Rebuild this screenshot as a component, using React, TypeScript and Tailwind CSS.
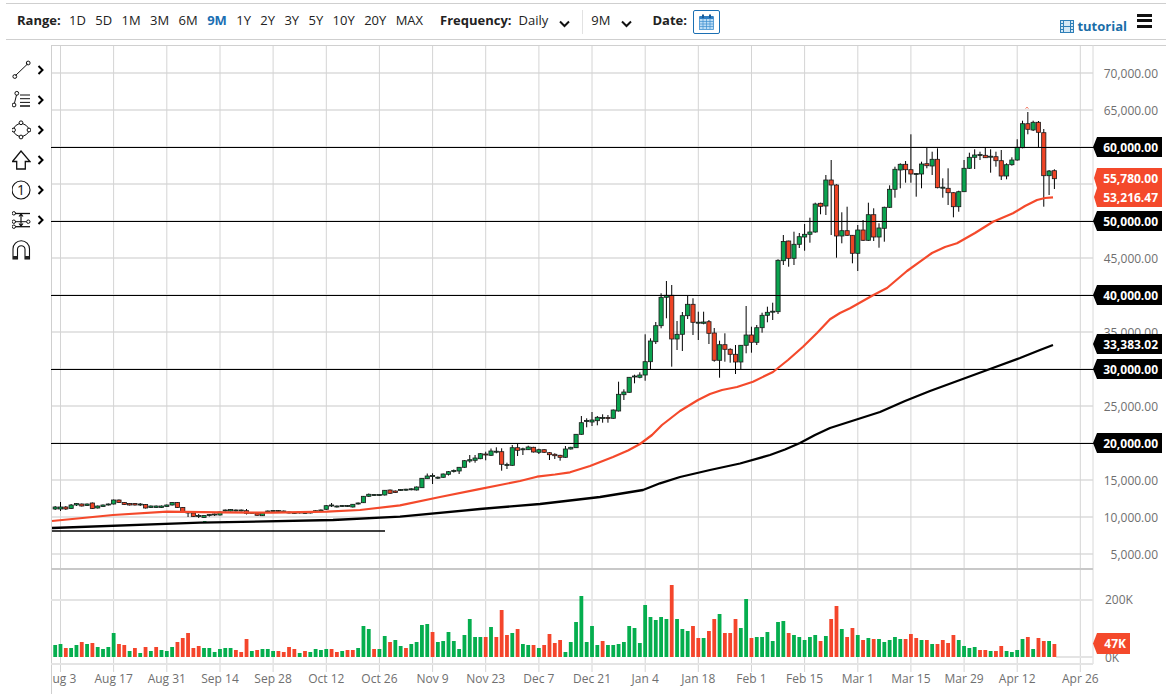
const ranges = ["1D", "5D", "1M", "3M", "6M", "9M", "1Y", "2Y", "3Y", "5Y", "10Y", "20Y", "MAX"];

// y of each candle in page pixels: [bodyTop, bodyBottom, high, low, up]
type Candle = [number, number, number, number, number];
const candles: Candle[] = [
  [507, 509, 506, 510, 1], [507, 509, 502, 511, 1], [507, 509, 506, 510, 0], [505, 508.5, 504, 509, 1], [503.5, 505, 503, 506, 1],
  [504, 506, 503.5, 506.5, 0], [504, 505.5, 503.5, 506, 1], [503, 508.5, 502.5, 509, 0], [506, 508, 505.5, 508.5, 1], [505, 506.5, 504.5, 507, 1],
  [504, 505, 503.5, 505.5, 1], [500, 504, 499.5, 504.5, 1], [500, 502.5, 499.5, 503, 0], [502.5, 504.5, 502, 505, 0], [503.5, 505, 503, 505.5, 0],
  [503.5, 505, 503, 505.5, 0], [504, 505, 503, 506, 1], [504.5, 508, 504, 508.5, 0], [506, 507.5, 505.5, 508, 1], [506, 507.5, 505.5, 508, 1],
  [506, 507.5, 505.5, 508, 1], [505, 506.5, 504.5, 507, 1], [502.5, 505, 502, 505.5, 1], [502.5, 507.5, 502, 508, 0], [507.5, 512, 507, 512.5, 0],
  [512, 513, 511.5, 517, 1], [513, 516.5, 512.5, 517, 0], [515.5, 516.5, 514, 518, 1], [515.5, 517.5, 515, 518, 1], [514.5, 515.5, 514, 516.5, 1],
  [514, 515, 513.5, 516, 1], [512, 515, 511.5, 515.5, 1], [510, 511, 509.5, 511.5, 1], [509.5, 511, 509, 511.5, 1], [510, 511, 509.5, 511.5, 1],
  [510, 511, 509.5, 511.5, 1], [510.7, 513.3, 509, 514.5, 0], [512.5, 513.5, 512, 514, 1], [513.3, 515.3, 513, 515.8, 0], [513, 515.7, 512.5, 516, 1],
  [511, 512, 510.5, 512.5, 1], [510.5, 511.5, 510, 512, 1], [510.5, 511.5, 510, 512, 1], [511, 512, 510.5, 512.5, 1], [512, 513, 511.5, 513.5, 1],
  [512.5, 513.5, 512, 514, 1], [512, 513, 511.5, 513.5, 1], [512.5, 513.5, 512, 514, 1], [512, 513, 511.5, 513.5, 1], [510.7, 511.7, 510, 512.5, 1],
  [510, 511, 509.5, 511.5, 1], [505.7, 509.3, 505, 510, 1], [505, 506, 503, 507, 1], [506, 507, 505.5, 507.5, 1], [505.5, 506.5, 505, 507, 1],
  [505.5, 506.5, 505, 507, 1], [504.3, 507, 504, 507.5, 1], [503, 504, 502.5, 504.5, 1], [496.3, 502.7, 496, 503, 1], [494.3, 496.3, 493.5, 497, 1],
  [494.5, 495.5, 494, 496, 1], [494.5, 495.5, 494, 496, 1], [490.3, 495, 490, 495.5, 1], [490, 493.3, 489.5, 494, 0], [491, 492.5, 490.5, 493, 0],
  [489.5, 490.5, 489, 491, 1], [489.2, 490.2, 488.8, 490.8, 1], [488.8, 489.8, 488.3, 490.3, 1], [487, 490, 486.5, 490.5, 1], [478.3, 487.7, 478, 488, 1],
  [476, 478.7, 473.5, 479, 1], [475.5, 476.5, 473.3, 484, 1], [477.2, 478.2, 476.5, 479, 1], [474, 477.3, 473.5, 477.8, 1], [471.7, 474.3, 471, 475.5, 1],
  [470.5, 471.5, 469.5, 472.5, 1], [467.3, 471, 467, 474, 1], [460.7, 467.3, 460.2, 467.8, 1], [459.7, 461, 455, 462.7, 1], [458, 460.3, 455, 462.7, 1],
  [453.7, 458.7, 453, 459.2, 1], [454, 455, 451.7, 460.3, 0], [451, 455.3, 448.5, 456, 1], [451.2, 452.2, 447.3, 453.3, 1], [451.7, 464.3, 448.3, 470.7, 0],
  [464.5, 465.5, 462.7, 469, 1], [447.7, 465.3, 445, 465.8, 1], [447.7, 450.3, 444, 456, 0], [448.8, 449.8, 447.7, 455, 1], [447, 449.7, 445.7, 450, 1],
  [447.3, 452, 446.8, 452.5, 0], [449.7, 452.3, 448.7, 454, 1], [449.7, 452.3, 449.2, 453, 0], [452.7, 454.7, 452, 460, 0], [454.3, 455.7, 453.3, 459, 0],
  [455.3, 457.3, 454.8, 460.7, 0], [449, 457.3, 446, 457.8, 1], [447.3, 449, 446.8, 449.5, 1], [434.3, 447.7, 434, 448, 1], [422.7, 434.3, 416, 434.8, 1],
  [420.5, 421.5, 418.3, 427.3, 1], [420, 422, 412, 426, 1], [417.3, 420.7, 416, 425.3, 1], [417.5, 418.5, 414.3, 422.7, 1], [417.5, 418.5, 415, 422.7, 0],
  [410, 418.3, 409.5, 418.8, 1], [394.3, 411, 381.7, 411.5, 1], [392, 394.7, 389.3, 400, 1], [377.3, 392.3, 377, 392.8, 1], [376, 377, 374.7, 383.3, 1],
  [375, 377.3, 372.3, 378.3, 1], [361.7, 375, 334.3, 380.7, 1], [341, 361.7, 338.3, 369, 1], [325.7, 341.7, 322, 344, 1], [297.3, 325.7, 293.3, 328.3, 1],
  [295.3, 297.3, 281, 318.3, 1], [295.3, 339, 285, 366.7, 0], [334.3, 339, 321, 350, 1], [315.7, 334.3, 312, 351, 1], [304.3, 315.7, 295, 319, 1],
  [304.3, 322.3, 298.3, 335, 0], [322.2, 323.2, 311.7, 340, 1], [322, 323.3, 311.7, 324.3, 1], [321.7, 333.3, 320, 344, 0], [333, 360.3, 328, 361.7, 0],
  [344.7, 360.3, 340.7, 377.7, 1], [344.7, 349.3, 333.3, 361.7, 0], [349.3, 354.3, 348.3, 362.7, 0], [354.3, 362, 345, 374, 0], [345.3, 362, 345, 369, 1],
  [335, 345.3, 306, 353.3, 1], [335, 342.3, 326.7, 352.7, 0], [327.7, 342.3, 325, 345, 1], [315.3, 327.7, 312.7, 332.7, 1], [312.3, 315.3, 306.7, 322.3, 1],
  [311.2, 312.2, 302.7, 320, 1], [260.3, 311.7, 259.3, 314, 1], [241.5, 260.7, 235, 265, 1], [241, 258.3, 240.7, 266.7, 0], [244.3, 258.3, 231.7, 265, 1],
  [236.7, 244.3, 233, 248, 1], [234.3, 237, 224, 250.7, 1], [232, 234.3, 217.7, 242.7, 1], [204, 232, 202.7, 232.7, 1], [203.3, 206.3, 202.7, 214.3, 0],
  [180, 206, 175, 215, 1], [180, 185, 160, 235, 0], [185, 236, 184.3, 257.7, 0], [230.7, 236, 212.3, 243.3, 1], [230.7, 235.3, 206.7, 236, 0],
  [235.3, 253.3, 235, 263.3, 0], [230, 253.3, 225, 271, 1], [230, 240.3, 220, 241, 0], [214.7, 240.3, 202.7, 241, 1], [214.7, 237, 208.3, 241, 0],
  [228, 237, 223.3, 247.7, 1], [207.3, 228.3, 206.7, 241.7, 1], [189.3, 207.3, 185.3, 208, 1], [169.3, 189.3, 166.7, 197.7, 1], [164.3, 170, 163.3, 188.3, 1],
  [164.3, 169.7, 161, 182.7, 0], [169.7, 174, 134.3, 182.7, 0], [173.5, 174.5, 173, 196.7, 1], [164, 174, 161.7, 188.3, 1], [163.7, 165.7, 147.7, 168.3, 0],
  [159.3, 166, 151.7, 175, 1], [159.3, 187.7, 148.3, 188.3, 0], [187.2, 188.2, 178.3, 197.7, 1], [188.3, 192.7, 168.3, 205, 0], [192.7, 206.7, 192.3, 217.3, 0],
  [191.7, 206.7, 190.7, 211.7, 1], [168.3, 191.7, 160, 192, 1], [157.3, 168.3, 152.7, 169, 1], [155, 157.3, 149.3, 169, 1], [154.5, 155.5, 151.7, 160, 1],
  [155.3, 157.7, 147.7, 157.7, 0], [156.2, 157.2, 149.3, 172.7, 1], [156.7, 160.7, 151.7, 166.7, 0], [160.7, 176, 150, 180, 0], [164.7, 176, 163.3, 179.3, 1],
  [160, 164.7, 157.3, 165.7, 1], [147.3, 160, 139.3, 160.7, 1], [123.7, 147.7, 120.7, 148.3, 1], [123.7, 129.3, 112, 134.3, 0], [122.3, 130, 120.7, 131, 1],
  [122.3, 132.3, 121, 147.3, 0], [132.7, 175.7, 129, 206.7, 0], [171, 175.7, 170, 195, 1], [170.7, 178.7, 169.3, 189, 0],
];

// height in px, negative = red
const volume = [
  12, 13, -9, 9, 12, -15, 13, -14, 10, 8, 10, 24, -13, -12, 6, -9, 4, -10, 6, -10, 7, 6, 10, -15, -19, -24, -9, -11, 9, 9, 5, 8, 9, 9, -7, -5, -18, 6, -7, 8,
  8, 6, -6, -5, -10, -8, 4, -6, 5, 8, 7, 8, -8, -5, 6, -7, -7, 9, 31, 28, -8, 8, 21, -15, 17,
  11, -9, 13, 15, 32, 33, -25, 15, 16, 25, 16, 8, 22, 38, 20, 20, -20, 30, -20, -47, -22, 24, -28, 13, 12, -12, 9, -12, -23, -14,
  -17, 5, 15, 35, 61, 15, 31, 12, -16, 12, 12, 13, 15, 31, 29, 14, 52, 40, 37, 40, 38, -72, 38, 28, 26, -31, -19, 19, -26, -38,
  43, -24, -24, -38, 29, 58, -19, 20, 20, 25, 16, 35,
  36, -24, 22, 20, 17, 20, 22, -16, 21, -38, -51, 28, -20, -29, 22, -17, 19, -18, 18, 15, 17, 20, 18, -18, -23, -19, 17, -17, 13, -13,
  -17, -14, -22, 17, 11, 9, 10, -7, -7, 6, -6, -11, 6, 5, 7, 18, -20, 8, -19, -16, 16, -13,
];

const redLine = "52,521 113,515 167,511.7 220,512.3 273,512.7 327,511.7 360,510 400,505.3 440,497 478,489.3 500,485 520,481 537,476.7 555,474.5 570,472.3 590,466 613,457 628,450.5 640,444 652,435 662,425 680,411 698,400 710,394 722,390 737,387 753,381.7 773,372 788,360 803,346.7 817,333 830,319.3 840,313 850,308.3 873,295.3 887,288 897,279.5 907,271 920,261.7 932,253 945,247 957,243.3 975,233 993,221.7 1013,213.3 1025,206 1037,200 1045,198 1053,197.3";
const blackLine = "52,528 200,522.7 333,520 400,516.7 480,509 540,504 600,497 643,490 660,483.3 680,477 710,470 740,463.5 770,455 785,449.5 800,443 815,435 830,428 855,420 880,412 905,401 930,391 960,380 990,369 1020,358 1040,350 1053,345";

const hLabels = [70, 65, 45, 35, 25, 15, 10, 5];
const xLabels: [number, string][] = [
  [113.6, "Aug 17"], [166.8, "Aug 31"], [220, "Sep 14"], [273.1, "Sep 28"], [326.3, "Oct 12"], [379.4, "Oct 26"],
  [432.6, "Nov 9"], [485.7, "Nov 23"], [538.9, "Dec 7"], [592, "Dec 21"], [645.2, "Jan 4"], [698.3, "Jan 18"], [751.5, "Feb 1"],
  [804.6, "Feb 15"], [857.8, "Mar 1"], [910.9, "Mar 15"], [964.1, "Mar 29"], [1017.2, "Apr 12"], [1080.3, "Apr 26"],
];
const levels: [number, string][] = [[147, "60,000.00"], [221, "50,000.00"], [295, "40,000.00"], [369, "30,000.00"], [443, "20,000.00"]];

const priceY = (k: number) => 591 - k * 7.4;
const candleX = (i: number) => 60.5 + 5.315 * (i - 1);

const Tag = ({ y, label, fill = "#000" }: { y: number; label: string; fill?: string }) => (
  <g>
    <polygon points={`1097,${y - 10} 1162,${y - 10} 1162,${y + 10} 1097,${y + 10} 1093,${y}`} fill={fill} />
    <text x={1158} y={y + 4.5} textAnchor="end" fontSize={12} fontWeight={700} fill="#fff">{label}</text>
  </g>
);

const Chart = () => (
  <svg width={1115} height={649} viewBox="51 45 1115 649" className="block shrink-0">
    {/* grid */}
    {[70, 65, 60, 55, 50, 45, 40, 35, 30, 25, 20, 15, 10, 5].map((k) => (
      <line key={k} x1={51} x2={1093} y1={priceY(k)} y2={priceY(k)} stroke="#e4e4e4" strokeWidth={2} />
    ))}
    {[60.5, ...xLabels.map(([x]) => x)].map((x) => (
      <line key={x} x1={x} x2={x} y1={45} y2={672} stroke="#d4d4d4" strokeWidth={1} />
    ))}
    <line x1={51} x2={1166} y1={45.5} y2={45.5} stroke="#d0d0d0" />
    <line x1={51.5} x2={51.5} y1={45} y2={694} stroke="#cfcfcf" />
    <line x1={1093} x2={1093} y1={45} y2={664} stroke="#d8d8d8" />
    <line x1={51} x2={1093} y1={569} y2={569} stroke="#c8c8c8" strokeWidth={2} />
    <line x1={51} x2={1093} y1={600} y2={600} stroke="#e4e4e4" strokeWidth={2} />
    <line x1={1056} x2={1093} y1={657} y2={657} stroke="#e4e4e4" strokeWidth={2} />
    <line x1={51} x2={1093} y1={664} y2={664} stroke="#e4e4e4" strokeWidth={2} />

    {/* candles */}
    {candles.map(([top, bot, hi, lo, up], i) => {
      const x = candleX(i);
      return (
        <g key={i}>
          <line x1={x} x2={x} y1={hi} y2={lo} stroke="#000" strokeWidth={1} />
          <rect x={x - 2.1} y={top} width={4.2} height={Math.max(bot - top, 1)} fill={up ? "#0aa34f" : "#ee4425"} stroke="#1a1a1a" strokeWidth={0.8} />
        </g>
      );
    })}
    <rect x={203} y={521} width={3.5} height={2} fill="#0aa34f" />
    <path d="M1025.5 108.5 Q1027 106 1028.5 108.5" fill="none" stroke="#f0614a" strokeWidth={0.9} />

    {/* levels and averages */}
    {levels.map(([y, t]) => (
      <line key={t} x1={51} x2={1095} y1={y + 0.5} y2={y + 0.5} stroke="#000" strokeWidth={1} />
    ))}
    <line x1={52} x2={385} y1={531} y2={531} stroke="#000" strokeWidth={1.5} />
    <polyline points={redLine} fill="none" stroke="#f4492b" strokeWidth={2.2} strokeLinejoin="round" />
    <polyline points={blackLine} fill="none" stroke="#000" strokeWidth={2.3} strokeLinejoin="round" />

    {/* volume */}
    {volume.map((v, i) => (
      <rect key={i} x={candleX(i) - 1.9} y={657 - Math.abs(v)} width={3.8} height={Math.abs(v)} fill={v > 0 ? "#05ae4e" : "#f4452b"} />
    ))}

    {/* axes */}
    <g fontSize={12} fill="#6f6f6f">
      {hLabels.map((k) => (
        <text key={k} x={1158} y={priceY(k) + 4.5} textAnchor="end">{k},000.00</text>
      ))}
      <text x={1105} y={604}>200K</text>
      <text x={1105} y={662}>0K</text>
      <text x={52.5} y={683}>ug 3</text>
      {xLabels.map(([x, t]) => (
        <text key={t} x={x} y={683} textAnchor="middle">{t}</text>
      ))}
    </g>

    {/* price tags */}
    {levels.map(([y, t]) => <Tag key={t} y={y} label={t} />)}
    <Tag y={344} label="33,383.02" />
    <polygon points="1097,168 1162,168 1162,207 1097,207 1094,197 1097,188 1094,178" fill="#f4492b" />
    <text x={1158} y={182.5} textAnchor="end" fontSize={12} fontWeight={700} fill="#fff">55,780.00</text>
    <text x={1158} y={201.5} textAnchor="end" fontSize={12} fontWeight={700} fill="#fff">53,216.47</text>
    <polygon points="1097,633 1130,633 1130,654 1097,654 1093,643.5" fill="#f4492b" />
    <text x={1126} y={648} textAnchor="end" fontSize={12} fontWeight={700} fill="#fff">47K</text>
  </svg>
);

const Chevron = () => (
  <svg width={8} height={10} viewBox="0 0 8 10" className="ml-[6px] shrink-0">
    <path d="M1.5 1 L5.5 5 L1.5 9" fill="none" stroke="#000" strokeWidth={2} />
  </svg>
);

const DownChevron = ({ className }: { className?: string }) => (
  <svg width={11} height={8} viewBox="0 0 11 8" className={className}>
    <path d="M1 1.5 L5.5 6 L10 1.5" fill="none" stroke="#111" strokeWidth={2} />
  </svg>
);

const tools = [
  <g key="line" fill="none" stroke="#111" strokeWidth={1}>
    <line x1={3.5} y1={15.5} x2={15.5} y2={4} />
    <circle cx={2.8} cy={16.5} r={1.9} />
    <circle cx={16.2} cy={3} r={1.9} />
  </g>,
  <g key="fib" fill="none" stroke="#111" strokeWidth={1}>
    <line x1={2.5} y1={13} x2={4.5} y2={5} />
    <circle cx={2} cy={15} r={1.9} />
    <circle cx={4.8} cy={3.3} r={1.9} />
    <line x1={8} x2={18} y1={5} y2={5} />
    <line x1={8} x2={18} y1={8.7} y2={8.7} />
    <line x1={8} x2={18} y1={12.4} y2={12.4} />
    <line x1={8} x2={18} y1={16} y2={16} strokeWidth={1.5} />
  </g>,
  <g key="poly" fill="none" stroke="#111" strokeWidth={1}>
    <path d="M7.5 3.5 Q3 5 1.6 8.5 M10.5 3.5 Q15 5 16.8 8.5 M1.6 11.8 Q3 15 7.5 16.5 M16.8 11.8 Q15 15 10.5 16.5" />
    <circle cx={9} cy={2.8} r={1.9} />
    <circle cx={1.5} cy={10} r={1.9} />
    <circle cx={17} cy={10} r={1.9} />
    <circle cx={9} cy={17} r={1.9} />
  </g>,
  <path key="arrow" d="M9 1 L18 11.5 H13.3 V19 H4.7 V11.5 H0.5 Z" fill="none" stroke="#111" strokeWidth={1.3} />,
  <g key="num">
    <circle cx={9} cy={10} r={9} fill="none" stroke="#111" strokeWidth={1.1} />
    <text x={9} y={15} textAnchor="middle" fontSize={14} fill="#111">1</text>
  </g>,
  <g key="measure" fill="none" stroke="#111" strokeWidth={1}>
    <line x1={3} x2={18} y1={3.5} y2={3.5} strokeWidth={1.3} />
    <line x1={3} x2={14.5} y1={11.7} y2={11.7} />
    <line x1={3.5} x2={18} y1={16.7} y2={16.7} strokeWidth={1.3} />
    <circle cx={1.8} cy={3.3} r={1.7} />
    <circle cx={1.8} cy={11.7} r={1.7} />
    <circle cx={1.8} cy={16.7} r={1.7} />
    <circle cx={16.3} cy={11.7} r={1.7} />
    <path d="M9 4 V16 M7 6.5 L9 4 L11 6.5 M7 13.5 L9 16 L11 13.5" strokeWidth={1.2} />
  </g>,
  <g key="magnet">
    <path d="M1 19 V9 A8.2 8.2 0 0 1 17.5 9 V19 H13 V9 A3.8 3.8 0 0 0 5.5 9 V19 Z" fill="none" stroke="#111" strokeWidth={1.1} />
    <rect x={1} y={16} width={4.5} height={3} fill="#222" />
    <rect x={13} y={16} width={4.5} height={3} fill="#222" />
  </g>,
];

const Toolbar = () => (
  <div className="w-[51px] shrink-0 flex flex-col pt-[10px] pl-[12px]">
    {tools.map((icon, i) => (
      <div key={i} className="h-[30px] flex items-center">
        <svg width={19} height={20} viewBox="0 0 19 20" className="shrink-0">{icon}</svg>
        {i < 6 && <Chevron />}
      </div>
    ))}
  </div>
);

const Header = () => (
  <div className="ml-[6px] mt-[3px] h-[35px] border-t border-b border-[#cfcfcf] flex items-center pl-[11px] text-[13px] text-[#222] box-content">
    <span className="font-bold w-[52px] mb-[2px]">Range:</span>
    <div className="flex gap-[9.4px] mb-[2px]">
      {ranges.map((r) => (
        <span key={r} className={r === "9M" ? "font-bold text-[#1b6fb3]" : "text-[#222]"}>{r}</span>
      ))}
    </div>
    <span className="font-bold ml-[17px] mb-[2px]">Frequency:</span>
    <span className="ml-[7px] mb-[2px]">Daily</span>
    <DownChevron className="ml-[11px] mt-[4px]" />
    <div className="ml-[12px] w-px h-[24px] bg-[#e2e2e2]" />
    <span className="ml-[8px] mb-[2px]">9M</span>
    <DownChevron className="ml-[11px] mt-[4px]" />
    <span className="font-bold ml-[20px] mb-[2px]">Date:</span>
    <div className="ml-[6px] w-[27px] h-[24px] rounded-[2px] border border-[#1b6fb3] flex items-center justify-center">
      <svg width={15} height={16} viewBox="0 0 15 16">
        <rect x={0.5} y={3} width={14} height={12.5} fill="#bcdcf5" stroke="#3f8fd0" strokeWidth={0.8} />
        <rect x={0.5} y={2} width={14} height={3} fill="#2f7fc4" />
        <rect x={3} y={0.5} width={2} height={3.5} fill="#1a5a96" />
        <rect x={10} y={0.5} width={2} height={3.5} fill="#1a5a96" />
        <path d="M0.5 7.5 H14.5 M0.5 10 H14.5 M0.5 12.5 H14.5 M4 5 V15 M7.5 5 V15 M11 5 V15" stroke="#3f8fd0" strokeWidth={0.7} />
      </svg>
    </div>
    <div className="ml-auto flex items-center mt-[10px] text-[#1a6ea8] font-bold">
      <svg width={14} height={13} viewBox="0 0 14 13" className="mr-[3px]">
        <rect x={0.5} y={0.5} width={13} height={12} fill="#d5e8f5" stroke="#2f7fb8" />
        <path d="M3.5 0.5 V12.5 M10.5 0.5 V12.5 M0.5 6.5 H13.5 M0.5 3.5 H3.5 M0.5 9.5 H3.5 M10.5 3.5 H13.5 M10.5 9.5 H13.5" stroke="#2f7fb8" />
      </svg>
      <span>tutorial</span>
    </div>
    <div className="ml-[10px] mr-[14px] mb-[2px] w-[15px] flex flex-col gap-[2.5px]">
      <div className="h-[3px] bg-[#111]" />
      <div className="h-[3px] bg-[#111]" />
      <div className="h-[3px] bg-[#111]" />
    </div>
  </div>
);

export default function App() {
  return (
    <div className="w-[1166px] h-[694px] bg-white overflow-hidden font-['Open_Sans',sans-serif]">
      <Header />
      <div className="flex mt-[5px]">
        <Toolbar />
        <Chart />
      </div>
    </div>
  );
}
